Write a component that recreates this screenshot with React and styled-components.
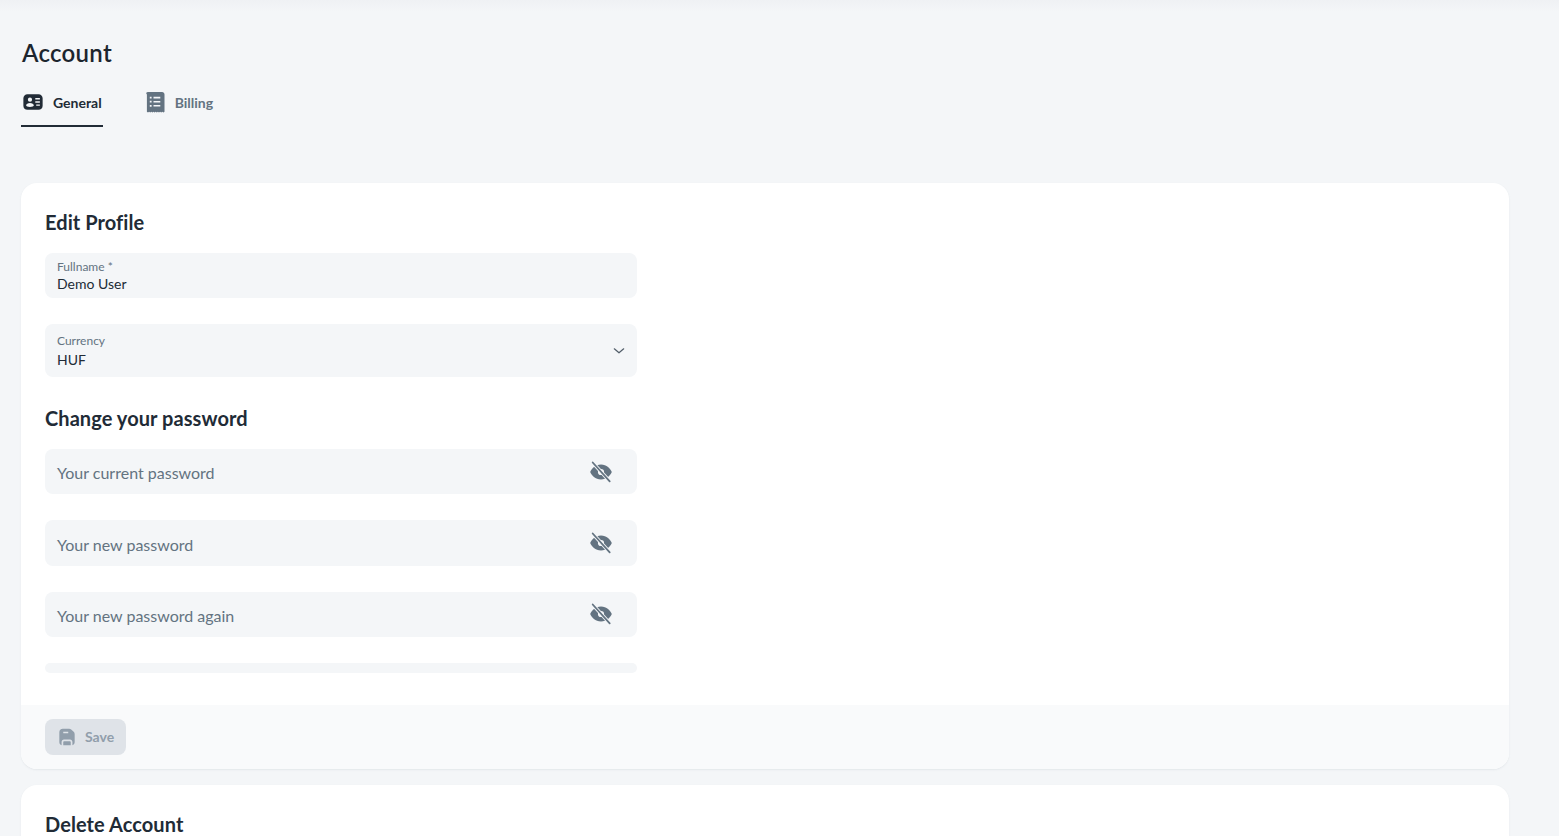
import React from "react";
import styled, { createGlobalStyle } from "styled-components";

const GlobalStyle = createGlobalStyle`
  html, body {
    margin: 0;
    height: 100%;
    overflow: hidden;
    background: #f4f6f8;
    font-family: "Lato", sans-serif;
    color: #212b36;
  }
  * { box-sizing: border-box; }
`;

const IdIcon = () => (
  <svg width="22" height="22" viewBox="0 0 24 24" fill="currentColor">
    <path fillRule="evenodd" d="M6 3.500h12c2.600 0 4.500 1.900 4.500 4.500v8c0 2.600-1.900 4.500-4.500 4.500H6c-2.600 0-4.500-1.900-4.500-4.500V8c0-2.600 1.900-4.500 4.500-4.500ZM8.700 7.200a2.300 2.300 0 1 0 0 4.600 2.300 2.300 0 0 0 0-4.600ZM4.500 15.600c0 1.200 1.900 1.900 4.200 1.900s4.200-.7 4.200-1.900-1.900-2.500-4.200-2.500-4.200 1.300-4.200 2.500ZM14.500 7.700v1.500h5V7.700h-5Zm0 3.500v1.500h5v-1.500h-5Zm1 3.500v1.500h4v-1.500h-4Z" />
  </svg>
);

const BillIcon = () => (
  <svg width="24" height="24" viewBox="0 0 24 24" fill="currentColor">
    <path fillRule="evenodd" d="M5 2h14c1.500 0 2.500 1 2.500 2.500v17.300l-1.100.6-1.100-.6-1.100.6-1.100-.6-1.100.6-1.100-.6-1.100.6-1.100-.6-1.100.6-1.100-.6-1.100.6-1.100-.6-1.100.6-1.100-.6-1.100.6-1.100-.6V4.500C2.500 3 3.500 2 5 2ZM6.800 6.700v1.800h1.800V6.700H6.800Zm3.700.1v1.600h6.800V6.800h-6.800Zm-3.700 4v1.800h1.800v-1.800H6.800Zm3.700.1v1.600h6.800v-1.600h-6.800Zm-3.700 4v1.800h1.800v-1.800H6.800Zm3.700.1v1.600h6.800V15h-6.800Z" />
  </svg>
);

const EyeOffIcon = () => (
  <svg width="24" height="24" viewBox="0 0 24 24">
    <path fill="currentColor" fillRule="evenodd" d="M12 4.500c5.600 0 9.600 4.300 10.800 7.500-1.200 3.200-5.200 7.500-10.800 7.500S2.400 15.200 1.200 12C2.400 8.800 6.400 4.500 12 4.500Zm0 4.400a3.100 3.100 0 1 0 0 6.200 3.100 3.100 0 0 0 0-6.200Z" />
    <path stroke="#f4f6f8" strokeWidth="3.400" d="M4 3l16.500 18" />
    <path stroke="currentColor" strokeWidth="1.800" strokeLinecap="round" d="M3.700 2.500l17 18.800" />
  </svg>
);

const SaveIcon = () => (
  <svg width="20" height="20" viewBox="0 0 24 24" fill="currentColor">
    <path fillRule="evenodd" d="M7 2h7.500c1 0 1.800.3 2.500 1l3 2.800c.8.800 1.200 1.700 1.200 2.800V18c0 2-1 3.400-2.700 3.800V18c0-1.700-1.200-2.900-2.900-2.900H8.400c-1.700 0-2.900 1.200-2.900 2.900v3.800C3.800 21.400 2.800 20 2.800 18V6.200C2.800 3.600 4.400 2 7 2Zm.5 3.800v1.600h6V5.800h-6ZM7.500 22v-4c0-.6.400-1 1-1h7c.6 0 1 .4 1 1v4h-9Z" />
  </svg>
);

const ChevronIcon = () => (
  <svg width="12" height="8" viewBox="0 0 12 8" fill="none" stroke="currentColor" strokeWidth="1.200" strokeLinecap="round" strokeLinejoin="round">
    <path d="M1.300 1.800l4.700 4 4.700-4" />
  </svg>
);

const Page = () => (
  <Screen>
    <GlobalStyle />
    <TopShade />
    <Content>
      <Title>Account</Title>
      <Tabs>
        <Tab $active>
          <IdIcon />
          General
        </Tab>
        <Tab>
          <BillIcon />
          Billing
        </Tab>
      </Tabs>
      <Card>
        <CardBody>
          <Heading>Edit Profile</Heading>
          <Field>
            <FieldLabel>Fullname *</FieldLabel>
            <FieldValue>Demo User</FieldValue>
          </Field>
          <SelectField>
            <FieldLabel>Currency</FieldLabel>
            <SelectValue>HUF</SelectValue>
            <Chevron>
              <ChevronIcon />
            </Chevron>
          </SelectField>
          <Heading>Change your password</Heading>
          {["Your current password", "Your new password", "Your new password again"].map((text) => (
            <PasswordField key={text}>
              <Placeholder>{text}</Placeholder>
              <EyeButton>
                <EyeOffIcon />
              </EyeButton>
            </PasswordField>
          ))}
          <ProgressStub />
        </CardBody>
        <CardFooter>
          <SaveButton>
            <SaveIcon />
            <SaveLabel>Save</SaveLabel>
          </SaveButton>
        </CardFooter>
      </Card>
      <Card>
        <CardBody>
          <Heading>Delete Account</Heading>
        </CardBody>
      </Card>
    </Content>
  </Screen>
);

const Screen = styled.div`
  position: relative;
  height: 100vh;
  overflow: hidden;
`;

const TopShade = styled.div`
  position: absolute;
  top: 0;
  left: 0;
  right: 0;
  height: 12px;
  background: linear-gradient(to bottom, #eff1f4, #f4f6f8);
`;

const Content = styled.main`
  position: relative;
  padding: 38px 50px 0 21px;
`;

const Title = styled.h1`
  margin: 0 0 0 1px;
  font-size: 24px;
  line-height: 30px;
  font-weight: 600;
  letter-spacing: 0.28px;
  color: #1c252e;
`;

const Tabs = styled.div`
  display: flex;
  gap: 40px;
  margin-top: 9px;
  margin-bottom: 56px;
`;

const Tab = styled.div`
  display: flex;
  align-items: center;
  gap: ${(p) => (p.$active ? "9px" : "8px")};
  height: 50px;
  padding: 2px 1px 0 ${(p) => (p.$active ? "1px" : "0")};
  font-size: 14px;
  font-weight: 700;
  color: ${(p) => (p.$active ? "#212b36" : "#637381")};
  border-bottom: 2px solid ${(p) => (p.$active ? "#212b36" : "transparent")};
`;

const Card = styled.section`
  background: #fff;
  border-radius: 16px;
  box-shadow: 0 1px 2px rgba(145, 158, 171, 0.16);
  margin-bottom: 16px;
  overflow: hidden;
`;

const CardBody = styled.div`
  padding: 24px 24px 32px;
`;

const Heading = styled.h2`
  margin: 0;
  height: 30px;
  font-size: 20px;
  line-height: 30px;
  font-weight: 700;
  letter-spacing: 0.07px;
  color: #212b36;
  margin-bottom: 16px;
`;

const Field = styled.div`
  width: 592px;
  height: 45px;
  padding: 7px 12px 0;
  background: #f4f6f8;
  border-radius: 8px;
  margin-bottom: 26px;
`;

const FieldLabel = styled.div`
  font-size: 12px;
  line-height: 14px;
  color: #637381;
`;

const FieldValue = styled.div`
  font-size: 14px;
  line-height: 20px;
  color: #212b36;
`;

const SelectField = styled(Field)`
  position: relative;
  height: 53px;
  padding-top: 10px;
`;

const SelectValue = styled(FieldValue)`
  margin-top: 2px;
`;

const Chevron = styled.span`
  position: absolute;
  right: 12px;
  top: 23px;
  color: #505c68;
  line-height: 0;
`;

const PasswordField = styled.div`
  display: flex;
  align-items: center;
  justify-content: space-between;
  width: 592px;
  height: 45.4px;
  padding: 0 24px 0 12px;
  background: #f4f6f8;
  border-radius: 8px;
  margin-bottom: 26px;
`;

const Placeholder = styled.span`
  font-size: 16px;
  padding-top: 2px;
  color: #637381;
`;

const EyeButton = styled.span`
  color: #637381;
  line-height: 0;
`;

const ProgressStub = styled.div`
  width: 592px;
  height: 10px;
  background: #f4f6f8;
  border-radius: 5px;
`;

const CardFooter = styled.div`
  padding: 14px 24px;
  background: #f9fafb;
`;

const SaveButton = styled.div`
  display: inline-flex;
  align-items: center;
  gap: 8px;
  height: 36px;
  padding: 0 12px;
  border-radius: 8px;
  background: #dfe3e8;
  color: #919eab;
  font-size: 14px;
  font-weight: 700;
`;

const SaveLabel = styled.span`
  padding-bottom: 2px;
`;

export default Page;
